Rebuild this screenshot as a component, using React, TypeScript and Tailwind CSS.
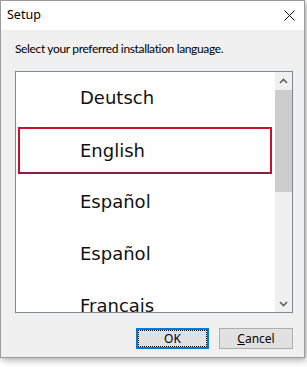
import React from 'react';

const items = ['Deutsch', 'English', 'Español', 'Español', 'Francais'];

function Chevron({ up }: { up?: boolean }) {
  return (
    <svg width="9" height="6" viewBox="0 0 9 6" className="block">
      <path
        d={up ? 'M1 5 L4.5 1.5 L8 5' : 'M1 1 L4.5 4.5 L8 1'}
        fill="none"
        stroke="#606060"
        strokeWidth="1.6"
      />
    </svg>
  );
}

export default function App() {
  return (
    <div className="w-[307px] h-[367px] bg-white overflow-hidden font-['Liberation_Sans',sans-serif]">
      <div className="w-[305px] h-[358px] flex flex-col border border-[#9a9a9a] bg-[#f0f0f0] shadow-[2px_2px_7px_rgba(0,0,0,0.35)]">
        {/* Title bar */}
        <div className="h-[29px] shrink-0 bg-white flex items-center justify-between pl-[6px] pr-[9px]">
          <span className="text-[12.5px] text-black font-['Noto_Sans',sans-serif]">Setup</span>
          <svg width="11" height="11" viewBox="0 0 11 11">
            <path d="M0.5 0.5 L10.5 10.5 M10.5 0.5 L0.5 10.5" stroke="#111" strokeWidth="1" />
          </svg>
        </div>

        {/* Body */}
        <div className="flex flex-col pl-[14px] pr-[11px] pt-[10px]">
          <p className="text-[12px] leading-[17px] text-black font-['Lato',sans-serif] tracking-[-0.35px]">
            Select your preferred installation language.
          </p>

          <div className="mt-[14px] h-[242px] border border-[#828790] bg-white flex overflow-hidden">
            <div className="flex-1 flex flex-col overflow-hidden">
              {items.map((item, i) => (
                <div key={i} className="h-[52px] shrink-0 flex items-stretch">
                  <div
                    className={
                      i === 1
                        ? 'flex-1 flex items-center mt-[3px] mb-[2px] ml-[2px] mr-[3px] pl-[60px] border-2 border-[#c8102e] border-b-[#8e1c3e] bg-[#fefefe]'
                        : 'flex-1 flex items-center pl-[64px]'
                    }
                  >
                    <span className="text-[18px] text-[#111] font-['DejaVu_Sans',sans-serif] leading-none">
                      {item}
                    </span>
                  </div>
                </div>
              ))}
            </div>

            {/* Scrollbar */}
            <div className="w-[17px] shrink-0 bg-[#f0f0f0] flex flex-col">
              <div className="h-[17px] flex items-center justify-center">
                <Chevron up />
              </div>
              <div className="mt-[1px] h-[102px] bg-[#cdcdcd]" />
              <div className="flex-1" />
              <div className="h-[17px] flex items-center justify-center">
                <Chevron />
              </div>
            </div>
          </div>

          {/* Buttons */}
          <div className="mt-[15px] flex justify-end gap-[10px]">
            <button className="w-[73px] h-[21px] bg-[#e1e1e1] border-2 border-[#0078d7] flex items-center justify-center p-0">
              <span className="w-full h-full border border-dotted border-black flex items-center justify-center text-[12px] text-black font-['Noto_Sans',sans-serif]">
                OK
              </span>
            </button>
            <button className="w-[74px] h-[21px] bg-[#e1e1e1] border border-[#adadad] flex items-center justify-center text-[12px] text-black font-['Noto_Sans',sans-serif]">
              <span>
                <span className="underline">C</span>ancel
              </span>
            </button>
          </div>
        </div>
      </div>
    </div>
  );
}
